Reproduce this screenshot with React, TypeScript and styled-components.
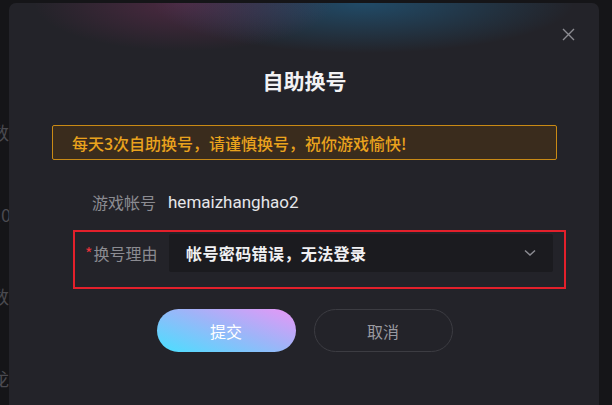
import React from "react";
import styled, { createGlobalStyle } from "styled-components";

const GlobalStyle = createGlobalStyle`
  html, body {
    margin: 0;
    padding: 0;
    background: #151518;
    font-family: "Noto Sans CJK SC", "Noto Sans", sans-serif;
  }
  * { box-sizing: border-box; }
`;

const Page = styled.div`
  position: relative;
  width: 612px;
  height: 405px;
  overflow: hidden;
  background: #151518;
`;

const BackList = styled.div`
  display: flex;
  flex-direction: column;
  gap: 60px;
  padding-top: 121px;
  margin-left: -9px;
`;

const BackItem = styled.div`
  font-size: 18px;
  line-height: 22px;
  color: #4a4a50;
`;

const Modal = styled.div`
  position: absolute;
  left: 9px;
  top: 3px;
  width: 590px;
  height: 430px;
  border-radius: 7px;
  padding: 63px 42px 0 43px;
  background:
    radial-gradient(ellipse 150px 48px at 175px 0, rgba(170, 55, 120, 0.3), transparent),
    radial-gradient(ellipse 210px 50px at 355px 0, rgba(30, 130, 190, 0.42), transparent),
    #232329;
`;

const Close = styled.button`
  position: absolute;
  top: 21px;
  right: 21px;
  width: 20px;
  height: 20px;
  padding: 0;
  border: none;
  background: none;
  display: flex;
  align-items: center;
  justify-content: center;
  cursor: pointer;
`;

const Title = styled.h2`
  margin: 0;
  text-align: center;
  font-size: 21px;
  line-height: 28px;
  font-weight: 700;
  color: #f2f2f4;
`;

const Notice = styled.div`
  margin-top: 31px;
  height: 35px;
  display: flex;
  align-items: center;
  padding-left: 19px;
  border: 1.5px solid #c98a15;
  border-radius: 2px;
  background: #3a2c1d;
  color: #eaa31d;
  font-size: 16px;
  font-weight: 500;
`;

const Row = styled.div`
  display: flex;
  align-items: center;
`;

const InfoRow = styled(Row)`
  margin-top: 30px;
  height: 24px;
`;

const Label = styled.div`
  width: 116px;
  padding-right: 12px;
  text-align: right;
  font-size: 16px;
  color: #8b8b91;
`;

const Star = styled.span`
  color: #e8323a;
  margin-right: 1px;
`;

const Value = styled.div`
  font-family: "Roboto", "Noto Sans CJK SC", sans-serif;
  font-size: 17px;
  color: #e6e6e9;
`;

const Highlight = styled.div`
  margin: 16px -9px 0 21px;
  border: 2px solid #e3202b;
  padding: 2px 11px 15px 10px;
`;

const ReasonLabel = styled(Label)`
  width: 84px;
  text-align: left;
  padding-right: 0;
`;

const Select = styled.div`
  flex: 1;
  height: 38px;
  display: flex;
  align-items: center;
  justify-content: space-between;
  padding: 0 17px 0 17px;
  background: #1b1b1f;
  border-radius: 2px;
  color: #f0f0f2;
  font-size: 16px;
  font-weight: 600;
  letter-spacing: 0.4px;
`;

const Buttons = styled.div`
  margin-top: 20px;
  display: flex;
  justify-content: center;
  gap: 18px;
`;

const Button = styled.button<{ $primary?: boolean }>`
  width: 139px;
  height: 43px;
  border-radius: 22px;
  font-family: inherit;
  font-size: 16px;
  cursor: pointer;
  color: ${(p) => (p.$primary ? "#ffffff" : "#9a9aa0")};
  border: ${(p) => (p.$primary ? "none" : "1.5px solid #3c3c42")};
  background: ${(p) =>
    p.$primary
      ? "linear-gradient(20deg, #48e0ff 0%, #9fb4f8 55%, #e996f6 100%)"
      : "transparent"};
`;

export default function App() {
  return (
    <Page>
      <GlobalStyle />
      <BackList>
        <BackItem>数</BackItem>
        <BackItem>10</BackItem>
        <BackItem>数</BackItem>
        <BackItem>龙</BackItem>
      </BackList>
      <Modal>
        <Close aria-label="关闭">
          <svg width="13" height="13" viewBox="0 0 13 13">
            <path d="M1 1 L12 12 M12 1 L1 12" stroke="#8c8c92" strokeWidth="1.4" />
          </svg>
        </Close>
        <Title>自助换号</Title>
        <Notice>每天3次自助换号，请谨慎换号，祝你游戏愉快!</Notice>
        <InfoRow>
          <Label>游戏帐号</Label>
          <Value>hemaizhanghao2</Value>
        </InfoRow>
        <Highlight>
          <Row>
            <ReasonLabel>
              <Star>*</Star>换号理由
            </ReasonLabel>
            <Select>
              <span>帐号密码错误，无法登录</span>
              <svg width="12" height="8" viewBox="0 0 12 8">
                <path d="M1 1.5 L6 6 L11 1.5" fill="none" stroke="#8c8c92" strokeWidth="1.5" />
              </svg>
            </Select>
          </Row>
        </Highlight>
        <Buttons>
          <Button $primary>提交</Button>
          <Button>取消</Button>
        </Buttons>
      </Modal>
    </Page>
  );
}
